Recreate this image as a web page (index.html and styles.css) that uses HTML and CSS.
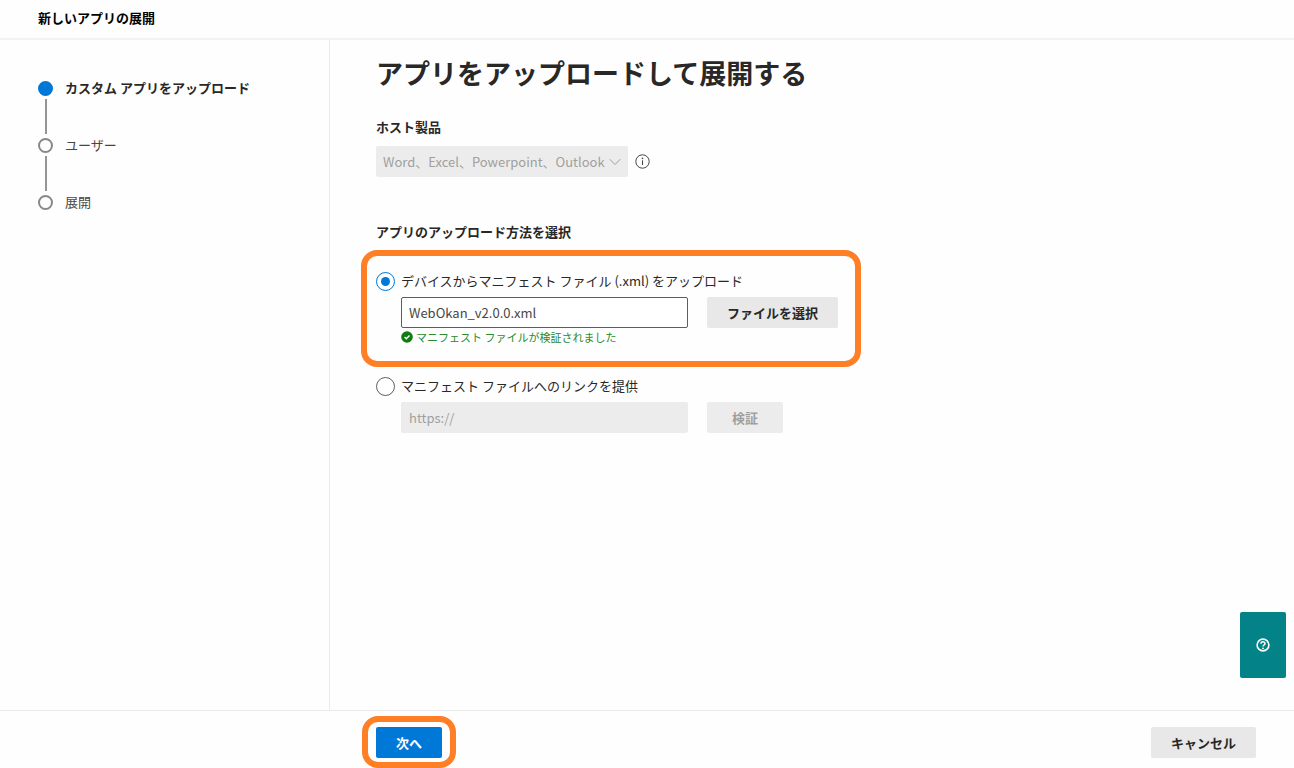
FILE: index.html
```
<!DOCTYPE html>
<html lang="ja">
<head>
  <meta charset="UTF-8">
  <meta name="viewport" content="width=device-width, initial-scale=1.0">
  <title>新しいアプリの展開</title>
  <link rel="stylesheet" href="styles.css">
</head>
<body>
  <header class="header">新しいアプリの展開</header>

  <div class="content">
    <nav class="sidebar">
      <ol class="steps">
        <li class="step active">カスタム アプリをアップロード</li>
        <li class="step">ユーザー</li>
        <li class="step">展開</li>
      </ol>
    </nav>

    <main class="main">
      <h1>アプリをアップロードして展開する</h1>

      <label class="field-label" for="host">ホスト製品</label>
      <div class="host-row">
        <div class="select-wrap">
          <select id="host" disabled>
            <option>Word、Excel、Powerpoint、Outlook</option>
          </select>
          <svg class="chevron" viewBox="0 0 12 8" width="12" height="8" aria-hidden="true">
            <path d="M0.7 1.2 L6 6.5 L11.3 1.2" fill="none" stroke="currentColor"/>
          </svg>
        </div>
        <button class="info-btn" type="button" aria-label="情報">
          <svg viewBox="0 0 15 15" width="15" height="15">
            <circle cx="7.5" cy="7.5" r="6.7" fill="none" stroke="currentColor"/>
            <path d="M7.5 6.3 V11" stroke="currentColor" stroke-width="1.1"/>
            <circle cx="7.5" cy="4.4" r="0.8" fill="currentColor"/>
          </svg>
        </button>
      </div>

      <h2>アプリのアップロード方法を選択</h2>

      <div class="upload-option highlight">
        <label class="radio-row">
          <input type="radio" name="method" checked>
          <span>デバイスからマニフェスト ファイル (.xml) をアップロード</span>
        </label>
        <div class="input-row">
          <input class="text-box" type="text" value="WebOkan_v2.0.0.xml" aria-label="マニフェスト ファイル">
          <button class="btn" type="button">ファイルを選択</button>
        </div>
        <p class="valid-msg">
          <svg viewBox="0 0 12 12" width="12" height="12" aria-hidden="true">
            <circle cx="6" cy="6" r="5.8" fill="#107c10"/>
            <path d="M3.6 6.1 L5.3 7.7 L8.5 4.5" fill="none" stroke="#fff" stroke-width="1.4"/>
          </svg>
          マニフェスト ファイルが検証されました
        </p>
      </div>

      <div class="upload-option">
        <label class="radio-row">
          <input type="radio" name="method">
          <span>マニフェスト ファイルへのリンクを提供</span>
        </label>
        <div class="input-row">
          <input class="text-box" type="text" placeholder="https://" aria-label="リンク" disabled>
          <button class="btn" type="button" disabled>検証</button>
        </div>
      </div>
    </main>
  </div>

  <footer class="footer">
    <div class="next-wrap highlight">
      <button class="btn primary" type="button">次へ</button>
    </div>
    <button class="btn" type="button">キャンセル</button>
  </footer>

  <button class="help-btn" type="button" aria-label="ヘルプ">
    <svg viewBox="0 0 14 14" width="14" height="14">
      <circle cx="7" cy="7" r="5.9" fill="none" stroke="currentColor" stroke-width="1.6"/>
      <path d="M5 5.7 C5 3.2 9 3.2 9 5.6 C9 7 7 7 7 8.6" fill="none" stroke="currentColor" stroke-width="1.5"/>
      <circle cx="7" cy="10.3" r="0.9" fill="currentColor"/>
    </svg>
  </button>
</body>
</html>
```
FILE: styles.css
```
*,
*::before,
*::after {
  box-sizing: border-box;
}
body {
  display: flex;
  flex-direction: column;
  min-height: 100vh;
  margin: 0;
  background-color: #fefefe;
  color: #292827;
  font-family: 'Noto Sans CJK JP', sans-serif;
  font-size: 13px;
  line-height: 20px;
}
button,
input,
select {
  font-family: inherit;
  font-size: 13px;
}
.header {
  padding: 8px 38px 10px;
  border-bottom: 2px solid #f3f3f3;
  color: #000;
  font-weight: 700;
}
.content {
  display: flex;
  flex: 1;
}

/* ステップ */
.sidebar {
  flex: 0 0 330px;
  padding: 38px 20px 0 38px;
  border-right: 1px solid #eaeaea;
}
.steps {
  margin: 0;
  padding: 0;
  list-style: none;
}
.step {
  display: grid;
  grid-template-columns: 15px 1fr;
  column-gap: 12px;
  row-gap: 1px;
  color: #484644;
}
.step::before {
  content: "";
  align-self: center;
  height: 15px;
  border: 2px solid #8a8886;
  border-radius: 50%;
}
.step:not(:last-child)::after {
  content: "";
  grid-column: 1;
  justify-self: center;
  width: 2px;
  height: 35px;
  margin-bottom: 1px;
  background-color: #979593;
}
.step.active {
  color: #292827;
  font-weight: 700;
}
.step.active::before {
  border-color: #0078d7;
  background-color: #0078d7;
}

/* メイン */
.main {
  flex: 1;
  padding: 15px 46px 20px;
}
h1 {
  margin: 0 0 26px;
  font-size: 27px;
  line-height: 36px;
}
h2 {
  margin: 45px 0 8px;
  font-size: 13px;
  line-height: 20px;
}
.field-label {
  display: block;
  margin-bottom: 9px;
  font-weight: 700;
}
.host-row {
  display: flex;
  align-items: center;
  gap: 7px;
}
.select-wrap {
  position: relative;
}
.select-wrap select {
  display: block;
  width: 252px;
  height: 31px;
  padding: 0 20px 0 7px;
  border: none;
  border-radius: 2px;
  background-color: #ececec;
  color: #a19f9d;
  opacity: 1;
  appearance: none;
}
.chevron {
  position: absolute;
  top: 12px;
  right: 7px;
  color: #a19f9d;
  pointer-events: none;
}
.info-btn {
  display: flex;
  padding: 0;
  border: none;
  background: none;
  color: #484644;
  cursor: pointer;
}
.highlight {
  border: 6px solid #ff7f27;
  border-radius: 16px;
}
.upload-option.highlight {
  width: fit-content;
  margin: 0 0 9px -15px;
  padding: 15px 17px 15px 9px;
}
.radio-row {
  display: flex;
  align-items: center;
  gap: 6px;
  height: 20px;
  margin-bottom: 6px;
}
.radio-row input {
  display: grid;
  place-content: center;
  width: 19px;
  height: 19px;
  margin: 0;
  border: 1px solid #605e5c;
  border-radius: 50%;
  background-color: #fff;
  appearance: none;
}
.radio-row input:checked {
  border-color: #0078d7;
}
.radio-row input:checked::before {
  content: "";
  width: 9px;
  height: 9px;
  border-radius: 50%;
  background-color: #0078d7;
}
.input-row {
  display: flex;
  gap: 19px;
  padding-left: 25px;
}
.text-box {
  width: 287px;
  height: 31px;
  padding: 0 7px;
  border: 1px solid #605e5c;
  border-radius: 2px;
  background-color: #fff;
  color: #484644;
}
.text-box:disabled {
  border-color: #ececec;
  background-color: #ececec;
}
.text-box::placeholder {
  color: #a19f9d;
}
.valid-msg {
  display: flex;
  align-items: center;
  gap: 3px;
  margin: 0;
  padding-left: 25px;
  color: #2b8a2b;
  font-size: 11px;
  line-height: 18px;
}
.btn {
  height: 31px;
  padding: 0 20px;
  border: none;
  border-radius: 2px;
  background-color: #e8e8e8;
  color: #292827;
  font-weight: 700;
  cursor: pointer;
}
.btn:disabled {
  padding: 0 25px;
  background-color: #ececec;
  color: #a19f9d;
  cursor: default;
}
.btn.primary {
  background-color: #0078d7;
  color: #fff;
}

/* フッター */
.footer {
  display: flex;
  justify-content: space-between;
  align-items: center;
  padding: 5px 38px 0 362px;
  border-top: 1px solid #eaeaea;
}
.next-wrap {
  display: flex;
  padding: 5px 8px 4px;
}
.help-btn {
  position: fixed;
  right: 8px;
  bottom: 90px;
  display: flex;
  justify-content: center;
  align-items: center;
  width: 46px;
  height: 66px;
  padding: 0;
  border: none;
  border-radius: 2px;
  background-color: #038387;
  color: #fff;
  cursor: pointer;
}
```
